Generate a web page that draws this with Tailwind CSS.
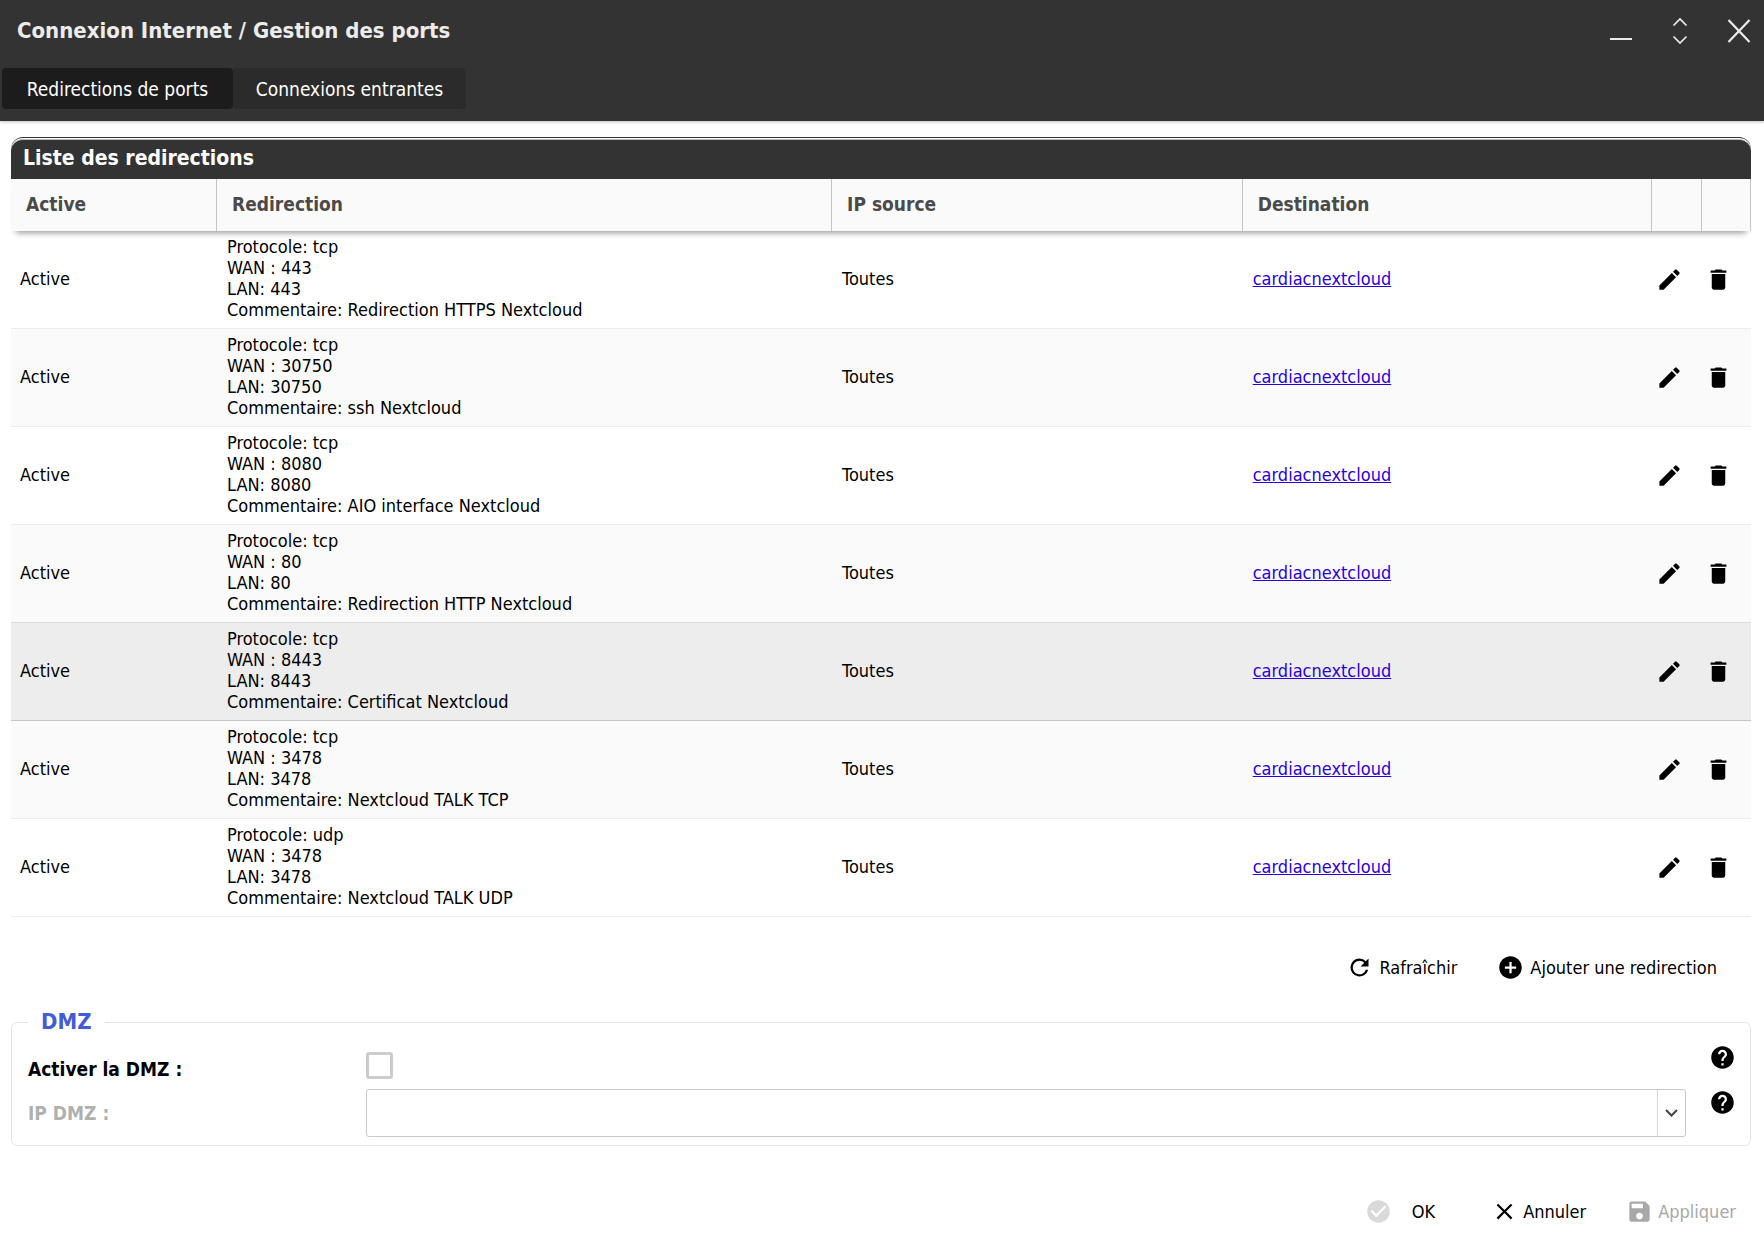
<!DOCTYPE html>
<html lang="fr">
<head>
<meta charset="utf-8">
<meta name="viewport" content="width=device-width, initial-scale=1">
<title>Connexion Internet / Gestion des ports</title>
<script src="https://cdn.jsdelivr.net/npm/@tailwindcss/browser@4"></script>
</head>
<body class="min-h-screen bg-white font-['DejaVu_Sans_Condensed',Tahoma,sans-serif] text-[18px] leading-[21px] text-black">
<svg class="hidden" aria-hidden="true">
  <symbol id="i-edit" viewBox="0 0 24 24"><path d="M3 17.25V21h3.75L17.81 9.94l-3.75-3.75L3 17.25zM20.71 7.04a1 1 0 0 0 0-1.41l-2.34-2.34a1 1 0 0 0-1.41 0l-1.83 1.83 3.75 3.75 1.83-1.83z"/></symbol>
  <symbol id="i-delete" viewBox="0 0 24 24"><path d="M6 19c0 1.100.9 2 2 2h8c1.100 0 2-.9 2-2V7H6v12zM19 4h-3.500l-1-1h-5l-1 1H5v2h14V4z"/></symbol>
  <symbol id="i-help" viewBox="0 0 24 24"><path d="M12 2C6.480 2 2 6.480 2 12s4.480 10 10 10 10-4.480 10-10S17.520 2 12 2zm1 17h-2v-2h2v2zm2.070-7.750l-.9.920C13.450 12.900 13 13.500 13 15h-2v-.5c0-1.100.450-2.100 1.170-2.830l1.240-1.260c.370-.360.590-.860.590-1.410 0-1.100-.9-2-2-2s-2 .9-2 2H8c0-2.210 1.790-4 4-4s4 1.790 4 4c0 .880-.360 1.680-.930 2.250z"/></symbol>
</svg>

<header class="bg-[#333] pb-3 shadow-[0_1px_3px_rgba(0,0,0,0.25)]">
  <div class="flex h-[68px] items-start justify-between pt-4 pr-[11px] pl-[17px]">
    <h1 class="text-[22px] leading-[30px] font-bold text-[#ececec]">Connexion Internet / Gestion des ports</h1>
    <div class="flex items-center gap-[31px] text-[#ececec]">
      <button type="button" aria-label="Réduire"><svg class="size-7" viewBox="0 0 28 28" fill="none" stroke="currentColor" stroke-width="2"><path d="M3 23h22"/></svg></button>
      <button type="button" aria-label="Restaurer"><svg class="size-7" viewBox="0 0 28 28" fill="none" stroke="currentColor" stroke-width="1.700"><path d="M7.500 9.500 14 3l6.500 6.500M7.500 20.500 14 27l6.500-6.500"/></svg></button>
      <button type="button" aria-label="Fermer"><svg class="size-7" viewBox="0 0 28 28" fill="none" stroke="currentColor" stroke-width="2.200"><path d="M3.500 4 24.500 26M24.500 4 3.500 26"/></svg></button>
    </div>
  </div>
  <nav class="flex pl-[2px] text-[19px] text-white">
    <a href="#redirections" class="flex h-[41px] w-[231px] items-center justify-center rounded-[4px] bg-[#1c1c1c] pt-[2px] whitespace-nowrap">Redirections de ports</a>
    <a href="#entrantes" class="flex h-[41px] w-[233px] items-center justify-center rounded-[4px] bg-[#2b2b2b] pt-[2px] whitespace-nowrap">Connexions entrantes</a>
  </nav>
</header>

<main class="pt-4 pr-[13px] pl-[11px]">
  <section>
    <div class="rounded-t-xl border-t border-[#333] pt-px">
      <h2 class="h-10 rounded-t-xl border-t border-[#bbb] bg-[#333] px-3 pt-[6px] text-[21px] leading-6 font-bold text-white">Liste des redirections</h2>
    </div>
    <table class="w-full table-fixed border-separate border-spacing-0 text-left">
      <colgroup>
        <col class="w-[206px]"><col class="w-[35.35%]"><col class="w-[23.6%]"><col><col class="w-[50px]"><col class="w-[49px]">
      </colgroup>
      <thead class="relative z-10 text-[19px] text-[#4a4a4a] shadow-[0_7px_6px_-5px_rgba(0,0,0,0.4)]">
        <tr class="h-[52px] bg-[#fafafa]">
          <th class="border-r border-r-[#c4c4c4] pb-px pl-[15px]">Active</th>
          <th class="border-r border-r-[#c4c4c4] pb-px pl-[15px]">Redirection</th>
          <th class="border-r border-r-[#c4c4c4] pb-px pl-[15px]">IP source</th>
          <th class="border-r border-r-[#c4c4c4] pb-px pl-[15px]">Destination</th>
          <th class="border-r border-r-[#c4c4c4]" aria-label="Modifier"></th>
          <th class="border-r border-r-[#c4c4c4]" aria-label="Supprimer"></th>
        </tr>
      </thead>
      <tbody id="rows"></tbody>
    </table>
    <div class="flex justify-end gap-10 pt-[37px] pr-[34px]">
      <button type="button" class="flex items-center gap-[6px] whitespace-nowrap">
        <svg class="size-[27px]" viewBox="0 0 24 24"><path d="M17.650 6.350A7.960 7.960 0 0 0 12 4a8 8 0 1 0 7.730 10h-2.080A6 6 0 1 1 12 6c1.660 0 3.140.690 4.220 1.780L13 11h7V4l-2.350 2.350z"/></svg>Rafraîchir
      </button>
      <button type="button" class="flex items-center gap-[6px] whitespace-nowrap">
        <svg class="size-[27px]" viewBox="0 0 24 24"><path d="M12 2C6.480 2 2 6.480 2 12s4.480 10 10 10 10-4.480 10-10S17.520 2 12 2zm5 11h-4v4h-2v-4H7v-2h4V7h2v4h4v2z"/></svg>Ajouter une redirection
      </button>
    </div>
  </section>

  <fieldset class="mt-7 rounded-md border border-[#e4e4e4] pr-[14px] pb-2 pl-4">
    <legend class="px-[13px] text-[22px] leading-[26px] font-bold text-[#435bd6]">DMZ</legend>
    <div class="grid grid-cols-[338px_1fr_50px] text-[19px] font-bold">
      <label for="dmz" class="pt-6">Activer la DMZ :</label>
      <div class="h-[54px] pt-[17px]"><input id="dmz" type="checkbox" class="block size-[27px] appearance-none rounded-[3px] border-3 border-[#ccc] bg-white"></div>
      <button type="button" aria-label="Aide" class="mt-[9px] size-[27px] justify-self-end"><svg class="size-[27px]"><use href="#i-help"/></svg></button>
      <label for="ip" class="pt-[14px] text-[#b0b0b0]">IP DMZ :</label>
      <div class="relative">
        <select id="ip" disabled class="block h-12 w-full appearance-none rounded-[3px] border border-[#c8c8c8] bg-white opacity-100"><option></option></select>
        <span class="pointer-events-none absolute inset-y-px right-px flex w-7 items-center justify-center border-l border-[#d8d8d8]"><svg class="h-2 w-[13px]" viewBox="0 0 13 8" fill="none" stroke="#444" stroke-width="2"><path d="M1 1l5.500 5.500L12 1"/></svg></span>
      </div>
      <button type="button" aria-label="Aide" class="size-[27px] justify-self-end"><svg class="size-[27px]"><use href="#i-help"/></svg></button>
    </div>
  </fieldset>
</main>

<footer class="flex justify-end pt-[52px] pr-7">
  <button type="button" class="mr-14 flex items-center gap-5">
    <svg class="size-[27px] text-[#d9d9d9]" viewBox="0 0 24 24" fill="currentColor"><path d="M12 2C6.480 2 2 6.480 2 12s4.480 10 10 10 10-4.480 10-10S17.520 2 12 2zm-2 15l-5-5 1.410-1.410L10 14.170l7.590-7.590L19 8l-9 9z"/></svg>OK
  </button>
  <button type="button" class="mr-10 flex items-center gap-[5px]">
    <svg class="size-[27px]" viewBox="0 0 24 24"><path d="M19 6.410L17.590 5 12 10.590 6.410 5 5 6.410 10.590 12 5 17.590 6.410 19 12 13.410 17.590 19 19 17.590 13.410 12z"/></svg>Annuler
  </button>
  <button type="button" disabled class="flex items-center gap-[5px] text-[#a8a8a8]">
    <svg class="size-[27px]" viewBox="0 0 24 24" fill="currentColor"><path d="M17 3H5a2 2 0 0 0-2 2v14a2 2 0 0 0 2 2h14c1.100 0 2-.9 2-2V7l-4-4zm-5 16c-1.660 0-3-1.340-3-3s1.340-3 3-3 3 1.340 3 3-1.340 3-3 3zm3-10H5V5h10v4z"/></svg>Appliquer
  </button>
</footer>

<script>
  const rules = [
    ["tcp", "443", "Redirection HTTPS Nextcloud", "border-[#ececec]"],
    ["tcp", "30750", "ssh Nextcloud", "border-[#ececec] bg-[#fafafa]"],
    ["tcp", "8080", "AIO interface Nextcloud", "border-[#ececec]"],
    ["tcp", "80", "Redirection HTTP Nextcloud", "border-[#dcdcdc] bg-[#fafafa]"],
    ["tcp", "8443", "Certificat Nextcloud", "border-[#c6c6c6] bg-[#ededed]"],
    ["tcp", "3478", "Nextcloud TALK TCP", "border-[#ececec] bg-[#fafafa]"],
    ["udp", "3478", "Nextcloud TALK UDP", "border-[#ececec]"]
  ];
  document.getElementById("rows").innerHTML = rules.map(([proto, port, note, tone]) => `
    <tr class="h-[98px] ${tone}">
      <td class="border-b border-inherit pb-[3px] pl-[9px]">Active</td>
      <td class="border-b border-inherit pb-[3px] pl-[10px] whitespace-nowrap">Protocole: ${proto}<br>WAN : ${port}<br>LAN: ${port}<br>Commentaire: ${note}</td>
      <td class="border-b border-inherit pb-[3px] pl-[10px]">Toutes</td>
      <td class="border-b border-inherit pb-[3px] pl-[10px]"><a href="#cardiacnextcloud" class="text-[#2a00e0] underline">cardiacnextcloud</a></td>
      <td class="border-b border-inherit pl-1"><button type="button" aria-label="Modifier" class="block"><svg class="size-[27px]"><use href="#i-edit"/></svg></button></td>
      <td class="border-b border-inherit pl-[3px]"><button type="button" aria-label="Supprimer" class="block"><svg class="size-[27px]"><use href="#i-delete"/></svg></button></td>
    </tr>`).join("");
</script>
</body>
</html>
